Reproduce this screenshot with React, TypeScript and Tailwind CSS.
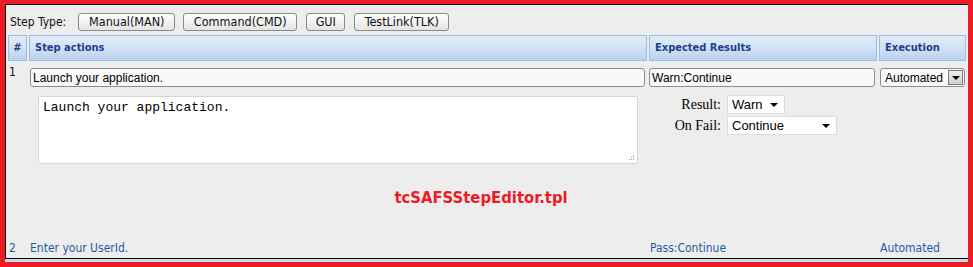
const tahoma = { fontFamily: '"DejaVu Sans Condensed", "DejaVu Sans", sans-serif' };

function TypeButton({ label, width }: { label: string; width: string }) {
  return (
    <button
      className={`${width} h-[18px] rounded-[3px] border border-[#8a8a8a] bg-gradient-to-b from-[#ffffff] to-[#e4e4e4] text-[12.5px] leading-none text-[#111] flex items-center justify-center`}
      style={tahoma}
    >
      {label}
    </button>
  );
}

function HeaderCell({ label, className = "" }: { label: string; className?: string }) {
  return (
    <div
      className={`h-[26px] border border-[#9dbde6] bg-gradient-to-b from-[#e1ebf7] via-[#d3e2f4] to-[#b9d1ef] flex items-center text-[11px] font-bold text-[#15428b] ${className}`}
      style={tahoma}
    >
      {label}
    </div>
  );
}

function SmallSelect({ value, width }: { value: string; width: string }) {
  return (
    <div
      className={`${width} h-[19px] bg-white border border-[#dcdcdc] flex items-center justify-between pl-[4px] pr-[6px] text-[13px] text-black`}
      style={{ fontFamily: '"Liberation Sans", Arial, sans-serif' }}
    >
      <span>{value}</span>
      <span className="w-0 h-0 border-l-[4px] border-r-[4px] border-t-[4px] border-l-transparent border-r-transparent border-t-black" />
    </div>
  );
}

export default function App() {
  const sans = { fontFamily: '"Liberation Sans", Arial, sans-serif' };
  return (
    <div className="w-[973px] h-[267px] bg-[#ed1c24] pt-[4px] pl-[5px] pr-[5px] overflow-hidden">
      <div className="h-[255px] bg-[#ededed] border-l border-t border-b border-black flex flex-col relative">
        {/* step type row */}
        <div className="flex items-center h-[18px] mt-[8px] pl-[4px]">
          <span className="text-[12px] text-[#111] mr-[12px]" style={tahoma}>
            Step Type:
          </span>
          <TypeButton label="Manual(MAN)" width="w-[97px]" />
          <div className="w-[8px]" />
          <TypeButton label="Command(CMD)" width="w-[114px]" />
          <div className="w-[9px]" />
          <TypeButton label="GUI" width="w-[39px]" />
          <div className="w-[9px]" />
          <TypeButton label="TestLink(TLK)" width="w-[95px]" />
        </div>

        {/* header */}
        <div className="grid grid-cols-[19px_618px_228px_87px] gap-x-[2px] pl-[2px] mt-[4px]">
          <HeaderCell label="#" className="justify-center" />
          <HeaderCell label="Step actions" className="pl-[5px]" />
          <HeaderCell label="Expected Results" className="pl-[5px]" />
          <HeaderCell label="Execution" className="pl-[5px]" />
        </div>

        {/* row 1 */}
        <div className="grid grid-cols-[19px_618px_228px_87px] gap-x-[2px] pl-[2px] mt-[7px]">
          <div className="text-[12px] leading-[12px] pl-[1px] text-[#111] mt-[-2px]" style={tahoma}>
            1
          </div>
          <div className="pl-[1px] pr-[2px]">
            <div
              className="h-[19px] rounded-[3px] border border-[#8c8c8c] bg-[#f9f9f9] flex items-center pl-[2px] text-[12px] text-black"
              style={sans}
            >
              Launch your application.
            </div>
          </div>
          <div className="pr-[2px]">
            <div
              className="h-[19px] rounded-[3px] border border-[#8c8c8c] bg-[#f9f9f9] flex items-center pl-[2px] text-[12px] text-black"
              style={sans}
            >
              Warn:Continue
            </div>
          </div>
          <div className="pl-[1px] pr-[1px]">
            <div
              className="h-[19px] rounded-[3px] border border-[#8c8c8c] bg-[#f9f9f9] flex items-center justify-between pl-[4px] pr-[1px] text-[12px] text-black"
              style={sans}
            >
              <span>Automated</span>
              <span className="w-[15px] h-[15px] border border-[#7a7a7a] bg-gradient-to-b from-[#eeeeee] to-[#cfcfcf] flex items-center justify-center">
                <span className="w-0 h-0 border-l-[4px] border-r-[4px] border-t-[4px] border-l-transparent border-r-transparent border-t-black" />
              </span>
            </div>
          </div>
        </div>

        {/* row 1 details */}
        <div className="flex items-start mt-[9px]">
          <div
            className="ml-[32px] w-[600px] h-[68px] bg-white border border-[#d6d6d6] rounded-[2px] relative px-[4px] pt-[1px] text-[13px] text-black"
            style={{ fontFamily: '"Liberation Mono", "Courier New", monospace' }}
          >
            Launch your application.
            <svg className="absolute right-[2px] bottom-[2px]" width="7" height="7" viewBox="0 0 7 7">
              <rect x="5" y="1" width="1" height="1" fill="#999" />
              <rect x="3" y="3" width="1" height="1" fill="#999" />
              <rect x="5" y="3" width="1" height="1" fill="#999" />
              <rect x="1" y="5" width="1" height="1" fill="#999" />
              <rect x="3" y="5" width="1" height="1" fill="#999" />
              <rect x="5" y="5" width="1" height="1" fill="#999" />
            </svg>
          </div>
          <div
            className="ml-[30px] grid grid-cols-[53px_auto] gap-x-[6px] gap-y-[2px] items-center mt-[-1px] text-[14px] leading-none text-black"
            style={{ fontFamily: '"Liberation Serif", "Times New Roman", serif' }}
          >
            <span className="text-right">Result:</span>
            <SmallSelect value="Warn" width="w-[58px]" />
            <span className="text-right">On Fail:</span>
            <SmallSelect value="Continue" width="w-[110px]" />
          </div>
        </div>

        {/* template name */}
        <div className="flex justify-center mt-[22px] pr-[12px]">
          <span className="text-[16.5px] font-bold text-[#ed1c24]" style={tahoma}>
            tcSAFSStepEditor.tpl
          </span>
        </div>

        {/* row 2 */}
        <div
          className="grid grid-cols-[19px_618px_228px_87px] gap-x-[2px] pl-[2px] mt-auto mb-[1px] text-[12px] text-[#1f5c9e]"
          style={tahoma}
        >
          <div className="pl-[1px]">2</div>
          <div className="pl-[1px]">Enter your UserId.</div>
          <div className="pl-[1px]">Pass:Continue</div>
          <div className="pl-[1px]">Automated</div>
        </div>
        <div className="absolute left-[-1px] right-0 bottom-[-4px] h-[3px] bg-[#c9d9ea]" />
      </div>
    </div>
  );
}
